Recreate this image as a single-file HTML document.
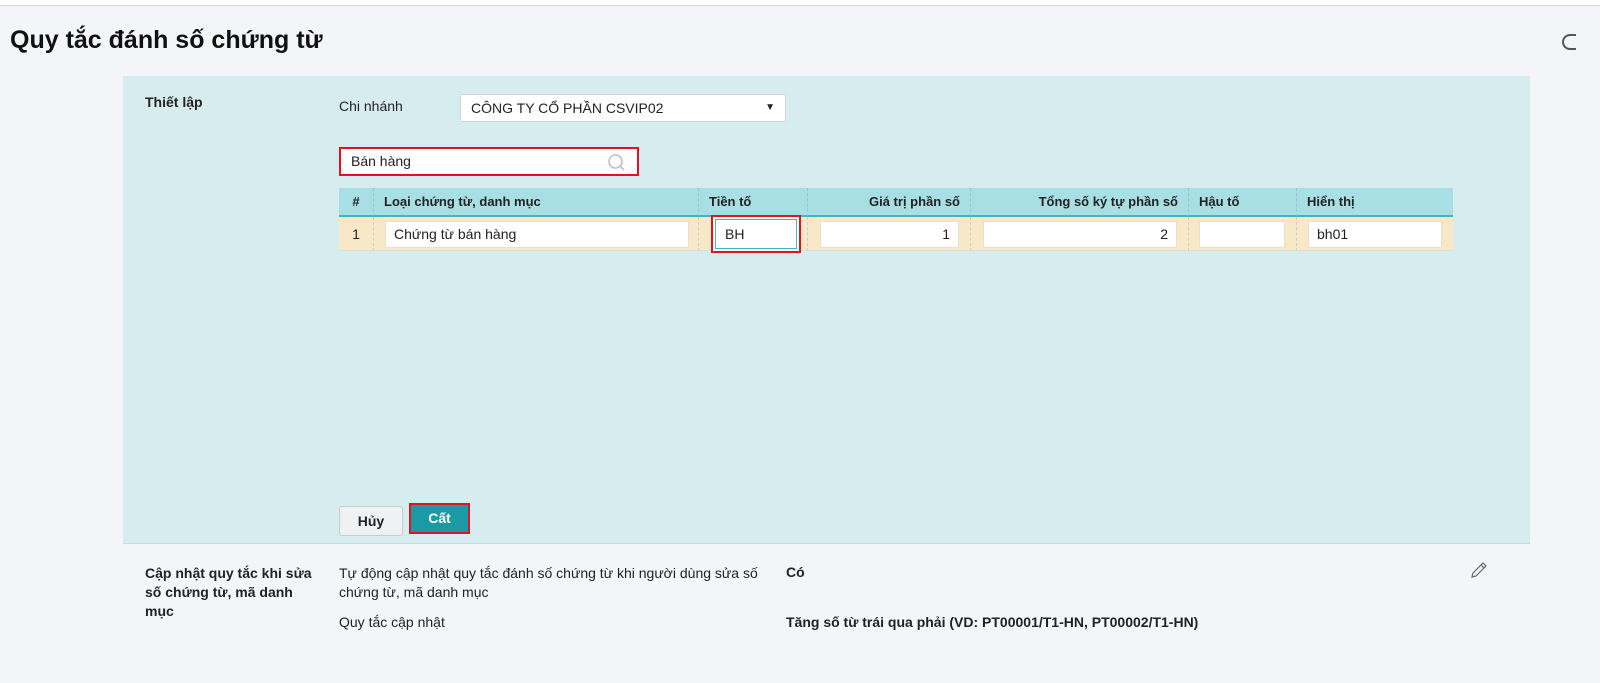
<!DOCTYPE html>
<html><head><meta charset="utf-8"><style>
*{box-sizing:border-box;margin:0;padding:0}
body{width:1600px;height:683px;background:#f3f5f8;font-family:"Liberation Sans",sans-serif;color:#222;position:relative;overflow:hidden;font-size:14px}
.a{position:absolute}
.top{left:0;top:0;width:1600px;height:6px;background:#fff;border-bottom:1px solid #dcdcdc}
h1{position:absolute;left:10px;top:26px;font-size:25px;font-weight:bold;color:#111}
.panel{left:123px;top:76px;width:1407px;height:468px;background:#d7ecef;border-bottom:1px solid #c5dde0}
.b{font-weight:bold}
.inp{background:#fff;border:1px solid #cfd6d8;border-radius:2px}
.th{top:188px;height:29px;background:#a8dfe4;border-bottom:2px solid #3fb6c0;font-weight:bold;font-size:13px;line-height:27px;border-right:1px dashed #8cc;padding:0 10px}
.td{top:217px;height:34px;background:#f7e9c8;border-right:1px dashed #ccc;border-bottom:1px solid #ddd}
.cell{position:absolute;top:4px;height:27px;background:#fff;border:1px solid #e8e0cc;border-radius:2px;line-height:25px;padding:0 8px;font-size:14px}
</style></head><body>
<div class="a top"></div>
<h1>Quy tắc đánh số chứng từ</h1>
<div class="a" style="left:1562px;top:34px;width:14px;height:16px;border:2px solid #555;border-right:none;border-radius:8px 0 0 8px"></div>
<div class="a panel"></div>
<div class="a b" style="left:145px;top:94px">Thiết lập</div>
<div class="a" style="left:339px;top:98px">Chi nhánh</div>
<div class="a inp" style="left:460px;top:94px;width:326px;height:28px;line-height:26px;padding-left:10px">CÔNG TY CỔ PHẦN CSVIP02<span style="position:absolute;right:10px;font-size:10px">▼</span></div>
<div class="a" style="left:339px;top:147px;width:300px;height:29px;background:#fff;border:2px solid #e0141e;line-height:25px;padding-left:10px">Bán hàng
<svg style="position:absolute;right:10px;top:4px" width="20" height="20" viewBox="0 0 20 20"><circle cx="8.5" cy="8.5" r="6.5" fill="none" stroke="#bbb" stroke-width="1.5"/><path d="M13 13l4 4" stroke="#bbb" stroke-width="1.5"/></svg></div>
<div class="a th" style="left:339px;width:35px;text-align:center;padding:0">#</div>
<div class="a th" style="left:374px;width:325px">Loại chứng từ, danh mục</div>
<div class="a th" style="left:699px;width:109px">Tiền tố</div>
<div class="a th" style="left:808px;width:163px;text-align:right">Giá trị phần số</div>
<div class="a th" style="left:971px;width:218px;text-align:right">Tổng số ký tự phần số</div>
<div class="a th" style="left:1189px;width:108px">Hậu tố</div>
<div class="a th" style="left:1297px;width:156px;border-right:none">Hiển thị</div>
<div class="a td" style="left:339px;width:35px;text-align:center;line-height:34px">1</div>
<div class="a td" style="left:374px;width:325px"><div class="cell" style="left:11px;width:304px">Chứng từ bán hàng</div></div>
<div class="a td" style="left:699px;width:109px"></div>
<div class="a td" style="left:808px;width:163px"><div class="cell" style="left:12px;width:139px;text-align:right">1</div></div>
<div class="a td" style="left:971px;width:218px"><div class="cell" style="left:12px;width:194px;text-align:right">2</div></div>
<div class="a td" style="left:1189px;width:108px"><div class="cell" style="left:10px;width:86px"></div></div>
<div class="a td" style="left:1297px;width:156px;border-right:none"><div class="cell" style="left:11px;width:134px">bh01</div></div>
<div class="a" style="left:711px;top:215px;width:90px;height:38px;border:2px solid #e0141e;background:#fff"><div style="position:absolute;left:2px;top:2px;right:2px;bottom:2px;border:1px solid #3fb6c0;line-height:28px;padding-left:9px">BH</div></div>
<div class="a" style="left:339px;top:506px;width:64px;height:30px;background:#eef2f3;border:1px solid #c4cdd0;border-radius:3px;text-align:center;line-height:28px;font-weight:bold">Hủy</div>
<div class="a" style="left:409px;top:503px;width:61px;height:31px;background:#1a9aa5;border:2px solid #e0141e;color:#fff;text-align:center;line-height:27px;font-weight:bold">Cất</div>
<div class="a b" style="left:145px;top:564px;width:180px;line-height:19px">Cập nhật quy tắc khi sửa số chứng từ, mã danh mục</div>
<div class="a" style="left:339px;top:564px;width:440px;line-height:19px">Tự động cập nhật quy tắc đánh số chứng từ khi người dùng sửa số chứng từ, mã danh mục</div>
<div class="a b" style="left:786px;top:564px">Có</div>
<div class="a" style="left:339px;top:614px">Quy tắc cập nhật</div>
<div class="a b" style="left:786px;top:614px">Tăng số từ trái qua phải (VD: PT00001/T1-HN, PT00002/T1-HN)</div>
<svg class="a" style="left:1470px;top:561px" width="18" height="18" viewBox="0 0 18 18"><path d="M2 16l1-4L13 2l3 3L6 15z M11 4l3 3" fill="none" stroke="#666" stroke-width="1.2"/></svg>
</body></html>
